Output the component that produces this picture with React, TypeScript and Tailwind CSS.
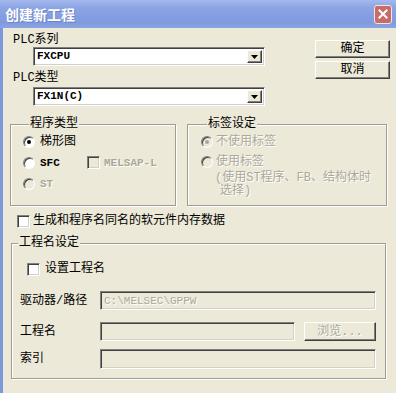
import React from 'react';

const sunken =
    'border border-t-[#808080] border-l-[#808080] border-b-white border-r-white shadow-[inset_1px_1px_0_#404040,inset_-1px_-1px_0_#d4d0c8]';
const raised =
    'border border-t-white border-l-white border-b-[#404040] border-r-[#404040] shadow-[inset_-1px_-1px_0_#808080] bg-[#ece9d8]';
const grayText = 'text-[#aca899] [text-shadow:1px_1px_0_#ffffff]';

function Radio({ checked, disabled }: { checked?: boolean; disabled?: boolean }) {
    return (
        <span
            className={`flex items-center justify-center w-3 h-3 shrink-0 rounded-full border border-t-[#808080] border-l-[#808080] border-b-white border-r-white shadow-[inset_1px_1px_0_#404040] ${
                disabled ? 'bg-[#ece9d8]' : 'bg-white'
            }`}
        >
            {checked && <span className={`w-1 h-1 rounded-full ${disabled ? 'bg-[#aca899]' : 'bg-black'}`} />}
        </span>
    );
}

function Check({ disabled }: { disabled?: boolean }) {
    return <span className={`w-[13px] h-[13px] shrink-0 ${sunken} ${disabled ? 'bg-[#ece9d8]' : 'bg-white'}`} />;
}

function Combo({ value }: { value: string }) {
    return (
        <div className={`ml-[30px] w-[232px] h-[19px] bg-white flex items-center p-[2px] ${sunken}`}>
            <span className="flex-1 pl-[1px] font-bold text-[11px] leading-[13px] font-['Liberation_Mono',monospace]">
                {value}
            </span>
            <span className={`w-[15px] h-full flex items-center justify-center ${raised}`}>
                <svg width="7" height="4" viewBox="0 0 7 4">
                    <path d="M0 0h7L3.5 4z" fill="#000" />
                </svg>
            </span>
        </div>
    );
}

function Group({ title, className, children }: { title: string; className: string; children: React.ReactNode }) {
    return (
        <fieldset
            className={`border border-[#a09d8e] shadow-[inset_1px_1px_0_#ffffff,1px_1px_0_#ffffff] ${className}`}
        >
            <legend className="ml-[6px] px-[1px] h-[14px] leading-[14px] bg-[#ece9d8]">{title}</legend>
            {children}
        </fieldset>
    );
}

export default function App() {
    return (
        <div className="w-[396px] h-[393px] flex flex-col overflow-hidden text-black text-[12px] leading-[14px] font-['Liberation_Mono','Noto_Sans_CJK_SC',monospace]">
            <div className="h-[28px] shrink-0 flex items-center pl-[5px] pr-[4px] bg-[linear-gradient(to_bottom,#a6b9ee,#8ca5e4_25%,#7f9ade_80%,#8aa3e2)]">
                <span className="flex-1 text-[14px] font-bold text-white font-['Noto_Sans_CJK_SC',sans-serif] [text-shadow:1px_1px_0_#6d84c4]">
                    创建新工程
                </span>
                <span className="w-[18px] h-[19px] rounded-[3px] border border-[#f2e4e4] bg-[#c66d69] flex items-center justify-center">
                    <svg width="10" height="10" viewBox="0 0 10 10">
                        <path d="M1.5 1.5l7 7M8.5 1.5l-7 7" stroke="#fff" strokeWidth="2" strokeLinecap="square" />
                    </svg>
                </span>
            </div>

            <div className="flex-1 bg-[#ece9d8] border-l-[3px] border-[#7c98d8] flex flex-col">
                <div className="flex">
                    <div className="flex flex-col">
                        <div className="ml-[10px] mt-[5px] h-[14px]">PLC系列</div>
                        <Combo value="FXCPU" />
                        <div className="ml-[10px] mt-[5px] h-[14px]">PLC类型</div>
                        <div className="mt-[2px]">
                            <Combo value="FX1N(C)" />
                        </div>
                    </div>
                    <div className="ml-auto mr-[6px] mt-[12px] flex flex-col gap-[3px]">
                        <button className={`w-[75px] h-[18px] flex items-center justify-center ${raised}`}>确定</button>
                        <button className={`w-[75px] h-[18px] flex items-center justify-center ${raised}`}>取消</button>
                    </div>
                </div>

                <div className="flex mt-[11px]">
                    <Group title="程序类型" className="ml-[7px] w-[166px] h-[89px] pl-[12px]">
                        <div className="h-[21px] flex items-center gap-[5px]">
                            <Radio checked />
                            <span>梯形图</span>
                        </div>
                        <div className="h-[21px] flex items-center">
                            <div className="w-[64px] flex items-center gap-[5px]">
                                <Radio />
                                <span className="font-bold text-[11px]">SFC</span>
                            </div>
                            <div className="flex items-center gap-[4px]">
                                <Check disabled />
                                <span className={`font-bold text-[11px] ${grayText}`}>MELSAP-L</span>
                            </div>
                        </div>
                        <div className="h-[21px] flex items-center gap-[5px]">
                            <Radio disabled />
                            <span className={`font-bold text-[11px] ${grayText}`}>ST</span>
                        </div>
                    </Group>
                    <Group title="标签设定" className="ml-[11px] w-[200px] h-[89px] pl-[13px]">
                        <div className={`h-[21px] flex items-center gap-[3px] ${grayText}`}>
                            <Radio checked disabled />
                            <span>不使用标签</span>
                        </div>
                        <div className={`h-[20px] flex items-center gap-[3px] ${grayText}`}>
                            <Radio disabled />
                            <span>使用标签</span>
                        </div>
                        <div className={`pl-[14px] leading-[13px] ${grayText}`}>
                            <div className="h-[13px] overflow-visible">(使用ST程序、FB、结构体时</div>
                            <div className="h-[13px] pl-[5px]">选择)</div>
                        </div>
                    </Group>
                </div>

                <div className="mt-[8px] ml-[14px] h-[14px] flex items-center gap-[3px]">
                    <Check />
                    <span>生成和程序名同名的软元件内存数据</span>
                </div>

                <Group title="工程名设定" className="mt-[8px] ml-[8px] w-[375px] h-[143px]">
                    <div className="mt-[12px] ml-[15px] h-[14px] flex items-center gap-[5px]">
                        <Check />
                        <span>设置工程名</span>
                    </div>
                    <div className="mt-[15px] flex items-center">
                        <span className="w-[88px] pl-[8px]">驱动器/路径</span>
                        <div className={`w-[276px] h-[19px] flex items-center pl-[3px] text-[11px] ${sunken}`}>
                            <span className={grayText}>C:\MELSEC\GPPW</span>
                        </div>
                    </div>
                    <div className="mt-[12px] flex items-center">
                        <span className="w-[88px] pl-[8px]">工程名</span>
                        <div className={`w-[195px] h-[19px] ${sunken}`} />
                        <button className={`ml-[9px] w-[72px] h-[19px] flex items-center justify-center ${raised} ${grayText}`}>
                            浏览...
                        </button>
                    </div>
                    <div className="mt-[8px] flex items-center">
                        <span className="w-[88px] pl-[8px]">索引</span>
                        <div className={`w-[276px] h-[20px] ${sunken}`} />
                    </div>
                </Group>
            </div>
        </div>
    );
}
